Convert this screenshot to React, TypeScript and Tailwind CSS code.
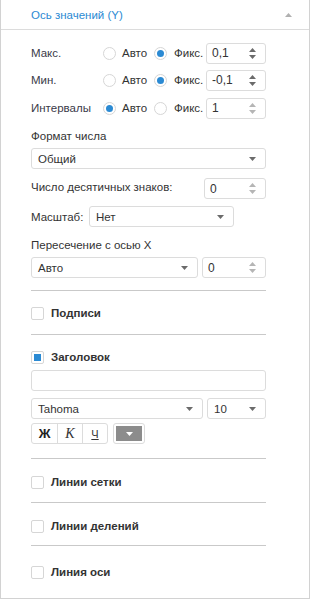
import React from "react";

const FONT = "font-['Liberation_Sans','DejaVu_Sans',sans-serif]";

function Radio({ checked }: { checked?: boolean }) {
  return (
    <span className="flex h-[13px] w-[13px] items-center justify-center rounded-full border border-[#d6d6d6] bg-white">
      {checked && <span className="h-[7px] w-[7px] rounded-full bg-[#2b8ad3]" />}
    </span>
  );
}

function Checkbox({ checked }: { checked?: boolean }) {
  return (
    <span className="flex h-[13px] w-[13px] shrink-0 items-center justify-center rounded-[2px] border border-[#d6d6d6] bg-white">
      {checked && <span className="h-[7px] w-[7px] bg-[#2b8ad3]" />}
    </span>
  );
}

function Caret({ up, color = "#6b6b6b" }: { up?: boolean; color?: string }) {
  return (
    <svg width="7" height="4" viewBox="0 0 7 4" className="block">
      <path d={up ? "M0 4 L3.5 0 L7 4 Z" : "M0 0 L7 0 L3.5 4 Z"} fill={color} />
    </svg>
  );
}

function Spin({ value, width, dim }: { value: string; width: string; dim?: boolean }) {
  const c = dim ? "#b5b5b5" : "#6b6b6b";
  return (
    <div className={`flex h-[21px] items-center justify-between rounded-[3px] border border-[#dcdcdc] bg-white pl-[5px] pr-[9px] ${width}`}>
      <span className="text-[12px] text-[#333]">{value}</span>
      <span className="flex flex-col gap-[3px]">
        <Caret up color={c} />
        <Caret color={c} />
      </span>
    </div>
  );
}

function Select({ value, width }: { value: string; width: string }) {
  return (
    <div className={`flex h-[21px] items-center justify-between rounded-[3px] border border-[#dcdcdc] bg-white pl-[6px] pr-[9px] ${width}`}>
      <span className="text-[#333]">{value}</span>
      <Caret />
    </div>
  );
}

function ModeRow({ label, auto, value, dim, mt }: { label: string; auto?: boolean; value: string; dim?: boolean; mt: string }) {
  return (
    <div className={`flex h-[22px] items-center ${mt}`}>
      <span className="w-[72px] text-[#3a3a48]">{label}</span>
      <span className="w-[19px]">
        <Radio checked={auto} />
      </span>
      <span className="w-[32px] text-[#333]">Авто</span>
      <span className="w-[20px]">
        <Radio checked={!auto} />
      </span>
      <span className="w-[32px] text-[#333]">Фикс.</span>
      <Spin value={value} width="w-[60px]" dim={dim} />
    </div>
  );
}

function Check({ label, checked, mt }: { label: string; checked?: boolean; mt: string }) {
  return (
    <div className={`flex h-[14px] items-center gap-[7px] ${mt}`}>
      <Checkbox checked={checked} />
      <span className="font-bold text-[#333]">{label}</span>
    </div>
  );
}

const Sep = ({ mt }: { mt: string }) => <div className={`h-px w-[235px] bg-[#c9c9c9] ${mt}`} />;

export default function App() {
  return (
    <div className={`h-[599px] w-[310px] border-x border-b border-[#d2d2d2] bg-white text-[11.5px] leading-[14px] ${FONT}`}>
      <div className="flex h-[30px] items-center justify-between border-b border-[#dcdcdc] pl-[30px] pr-[17px]">
        <span className="text-[#2b8ad3]">Ось значений (Y)</span>
        <Caret up color="#b0b0b0" />
      </div>

      <div className="ml-[30px] flex w-[235px] flex-col">
        <ModeRow label="Макс." value="0,1" mt="mt-[12px]" />
        <ModeRow label="Мин." value="-0,1" mt="mt-[5px]" />
        <ModeRow label="Интервалы" auto value="1" dim mt="mt-[6px]" />

        <span className="mt-[10px] text-[#333]">Формат числа</span>
        <div className="mt-[5px]">
          <Select value="Общий" width="w-[235px]" />
        </div>

        <div className="mt-[9px] flex items-center justify-between">
          <span className="-mt-[4px] text-[#333]">Число десятичных знаков:</span>
          <Spin value="0" width="w-[62px]" dim />
        </div>

        <div className="mt-[7px] flex items-center">
          <span className="w-[58px] text-[#333]">Масштаб:</span>
          <Select value="Нет" width="w-[145px]" />
        </div>

        <span className="mt-[11px] text-[#333]">Пересечение с осью X</span>
        <div className="mt-[5px] flex justify-between">
          <Select value="Авто" width="w-[167px]" />
          <Spin value="0" width="w-[64px]" dim />
        </div>

        <Sep mt="mt-[12px]" />
        <Check label="Подписи" mt="mt-[15px]" />
        <Sep mt="mt-[14px]" />
        <Check label="Заголовок" checked mt="mt-[15px]" />

        <div className="mt-[6px] h-[21px] w-[235px] rounded-[3px] border border-[#dcdcdc] bg-white" />

        <div className="mt-[7px] flex justify-between">
          <Select value="Tahoma" width="w-[172px]" />
          <Select value="10" width="w-[59px]" />
        </div>

        <div className="mt-[4px] flex items-center">
          <div className="flex h-[21px] rounded-[3px] border border-[#dcdcdc]">
            <span className="flex w-[26px] items-center justify-center border-r border-[#dcdcdc] font-bold text-[13px] text-[#222]">Ж</span>
            <span className="flex w-[25px] items-center justify-center border-r border-[#dcdcdc] font-['Liberation_Serif',serif] italic text-[14px] text-[#333]">К</span>
            <span className="flex w-[24px] items-center justify-center text-[11px] text-[#333] underline">Ч</span>
          </div>
          <div className="ml-[5px] flex h-[21px] w-[32px] items-center justify-center rounded-[3px] border border-[#dcdcdc] p-[2px]">
            <div className="flex h-full w-full items-center justify-center bg-[#8c8c8c]">
              <Caret color="#ffffff" />
            </div>
          </div>
        </div>

        <Sep mt="mt-[14px]" />
        <Check label="Линии сетки" mt="mt-[16px]" />
        <Sep mt="mt-[13px]" />
        <Check label="Линии делений" mt="mt-[16px]" />
        <Sep mt="mt-[12px]" />
        <Check label="Линия оси" mt="mt-[19px]" />
      </div>
    </div>
  );
}
